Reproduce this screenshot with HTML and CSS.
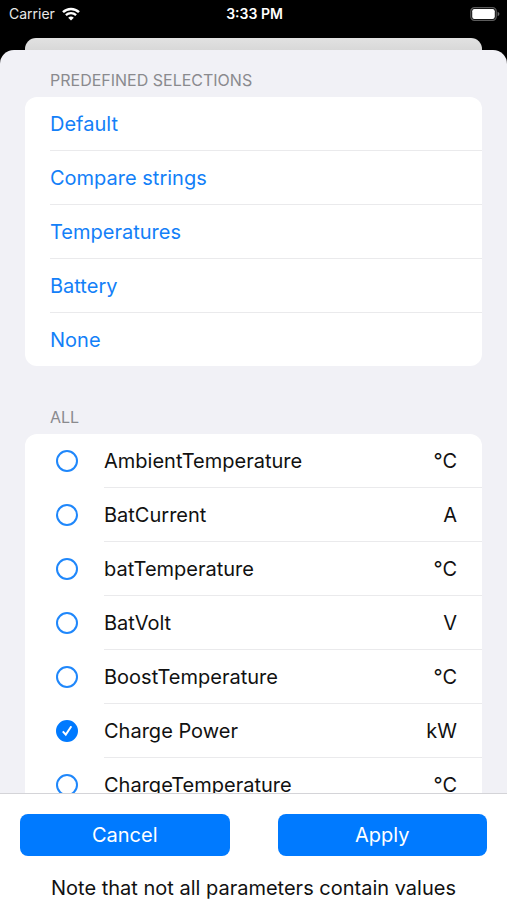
FILE: index.html
```html
<!DOCTYPE html>
<html lang="en">
<head>
<meta charset="utf-8">
<meta name="viewport" content="width=device-width, initial-scale=1">
<title>Select parameters</title>
<link rel="stylesheet" href="styles.css">
</head>
<body>
<div class="app">
  <header class="status">
    <div class="carrier">
      <span>Carrier</span>
      <svg class="wifi" viewBox="0 0 18 14" aria-hidden="true">
        <path d="M1 5.2a11.6 11.6 0 0 1 16 0" fill="none" stroke="#fff" stroke-width="2.5"/>
        <path d="M3.9 8.2a7.4 7.4 0 0 1 10.2 0" fill="none" stroke="#fff" stroke-width="2.3"/>
        <path d="M6.2 10.8a4 4 0 0 1 5.6 0L9 13.6z" fill="#fff"/>
      </svg>
    </div>
    <time class="clock">3:33 PM</time>
    <svg class="battery" viewBox="0 0 30 14" aria-hidden="true">
      <rect x="0.8" y="0.7" width="25.4" height="12.6" rx="3.6" fill="none" stroke="#5c5c5c" stroke-width="1.2"/>
      <rect x="2.2" y="2.1" width="22.6" height="9.8" rx="2.2" fill="#fff"/>
      <path d="M27.6 4.8c2.4.8 2.4 3.6 0 4.4z" fill="#6a6a6a"/>
    </svg>
  </header>
  <div class="backdrop"></div>
  <main class="sheet">
    <section class="group">
      <h2 class="heading">PREDEFINED SELECTIONS</h2>
      <ul class="card">
        <li class="row"><button class="preset" type="button">Default</button></li>
        <li class="row"><button class="preset" type="button">Compare strings</button></li>
        <li class="row"><button class="preset" type="button">Temperatures</button></li>
        <li class="row"><button class="preset" type="button">Battery</button></li>
        <li class="row"><button class="preset" type="button">None</button></li>
      </ul>
    </section>
    <section class="group">
      <h2 class="heading">ALL</h2>
      <ul class="card">
        <li class="option"><input class="tick" type="checkbox" id="p1"><label class="row param" for="p1"><span>AmbientTemperature</span><span>°C</span></label></li>
        <li class="option"><input class="tick" type="checkbox" id="p2"><label class="row param" for="p2"><span>BatCurrent</span><span>A</span></label></li>
        <li class="option"><input class="tick" type="checkbox" id="p3"><label class="row param" for="p3"><span>batTemperature</span><span>°C</span></label></li>
        <li class="option"><input class="tick" type="checkbox" id="p4"><label class="row param" for="p4"><span>BatVolt</span><span>V</span></label></li>
        <li class="option"><input class="tick" type="checkbox" id="p5"><label class="row param" for="p5"><span>BoostTemperature</span><span>°C</span></label></li>
        <li class="option"><input class="tick" type="checkbox" id="p6" checked><label class="row param" for="p6"><span>Charge Power</span><span>kW</span></label></li>
        <li class="option"><input class="tick" type="checkbox" id="p7"><label class="row param" for="p7"><span>ChargeTemperature</span><span>°C</span></label></li>
      </ul>
    </section>
  </main>
  <footer class="footer">
    <div class="actions">
      <button class="action" type="button">Cancel</button>
      <button class="action" type="button">Apply</button>
    </div>
    <p class="note">Note that not all parameters contain values</p>
  </footer>
</div>
</body>
</html>
```

FILE: styles.css
```css
* {
  box-sizing: border-box;
}

body {
  margin: 0;
  background: #000;
  color: #111;
  font: 20px/24px Inter, "Liberation Sans", sans-serif;
}

button {
  font: inherit;
  cursor: pointer;
}

.app {
  display: flex;
  flex-direction: column;
  height: 100vh;
}

.status {
  display: grid;
  grid-template-columns: 1fr auto 1fr;
  align-items: center;
  height: 28px;
  padding: 0 7px 0 9px;
  color: #e8e8e8;
  font-size: 14px;
}

.carrier {
  display: flex;
  align-items: center;
  gap: 7px;
}

.wifi {
  width: 18px;
  height: 14px;
}

.clock {
  color: #fff;
  font-weight: 600;
}

.battery {
  justify-self: end;
  width: 30px;
  height: 14px;
}

.backdrop {
  flex: none;
  height: 12px;
  margin: 10px 25px 0;
  border-radius: 11px 11px 0 0;
  background: linear-gradient(#e2e2e2, #d8d8d8);
}

.sheet {
  flex: 1;
  min-height: 0;
  overflow: hidden;
  padding: 20px 25px 0;
  border-radius: 14px 14px 0 0;
  background: #f1f1f6;
}

.group + .group {
  margin-top: 41px;
}

.heading {
  margin: 0;
  padding: 0 25px 7px;
  color: #8a8a8e;
  font-size: 16px;
  font-weight: 400;
  line-height: 20px;
}

.card {
  margin: 0;
  padding: 0 0 0 25px;
  border-radius: 12px;
  background: #fff;
  list-style: none;
}

.row {
  display: flex;
  align-items: center;
  height: 54px;
  border-bottom: 1px solid #eaeaec;
}

li:last-child.row {
  height: 53px;
  border-bottom: 0;
}

.preset {
  flex: 1;
  height: 100%;
  padding: 0;
  border: 0;
  background: none;
  color: #1380f8;
  text-align: left;
}

.option {
  display: flex;
  align-items: center;
}

.tick {
  display: grid;
  place-items: center;
  flex: none;
  appearance: none;
  width: 22px;
  height: 22px;
  margin: 0 26px 0 6px;
  border: 2px solid #1f87fb;
  border-radius: 50%;
}

.tick:checked {
  border-color: #007aff;
  background: #007aff;
}

.tick:checked::before {
  content: "";
  width: 11px;
  height: 11px;
  background: #fff;
  clip-path: polygon(5% 60%, 18% 47%, 38% 69%, 82% 2%, 97% 12%, 40% 98%);
}

.param {
  flex: 1;
  justify-content: space-between;
  padding-right: 25px;
}

.footer {
  flex: none;
  padding: 20px 20px 0;
  height: 107px;
  border-top: 1px solid #d4d4d8;
  background: #fff;
}

.actions {
  display: grid;
  grid-template-columns: 1fr 1fr;
  gap: 48px;
}

.action {
  height: 42px;
  padding: 0;
  border: 0;
  border-radius: 8px;
  background: #007aff;
  color: #fff;
}

.note {
  margin: 20px 0 0;
  text-align: center;
}
```
